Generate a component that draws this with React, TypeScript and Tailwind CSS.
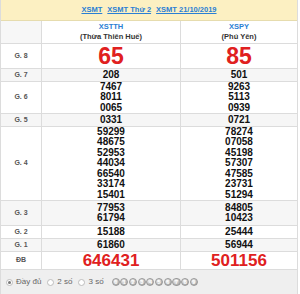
import React from "react";

const rows: { label: string; a: string[]; b: string[]; kind?: "big" | "db"; alt?: boolean; h: number }[] = [
  { label: "G. 8", a: ["65"], b: ["85"], kind: "big", h: 25 },
  { label: "G. 7", a: ["208"], b: ["501"], alt: true, h: 13 },
  { label: "G. 6", a: ["7467", "8011", "0065"], b: ["9263", "5113", "0939"], h: 32 },
  { label: "G. 5", a: ["0331"], b: ["0721"], alt: true, h: 13 },
  { label: "G. 4", a: ["59299", "48675", "52953", "44034", "66540", "33174", "15401"], b: ["78274", "07058", "45198", "57307", "47585", "23731", "51294"], h: 74 },
  { label: "G. 3", a: ["77953", "61794"], b: ["84805", "10423"], alt: true, h: 25 },
  { label: "G. 2", a: ["15188"], b: ["25444"], h: 13 },
  { label: "G. 1", a: ["61860"], b: ["56944"], alt: true, h: 13 },
  { label: "ĐB", a: ["646431"], b: ["501156"], kind: "db", h: 18 },
];

function Cell({ vals, kind }: { vals: string[]; kind?: "big" | "db" }) {
  if (kind === "big")
    return <div className="text-[23px] leading-[23px] font-bold text-[#e02020]">{vals[0]}</div>;
  if (kind === "db")
    return <div className="text-[17px] leading-[17px] font-bold text-[#e02020]">{vals[0]}</div>;
  return (
    <div className="flex flex-col items-center text-[10px] leading-[10.5px] font-bold text-[#111]">
      {vals.map((v) => (
        <span key={v}>{v}</span>
      ))}
    </div>
  );
}

function Radio({ on }: { on?: boolean }) {
  return (
    <span className="w-[7px] h-[7px] shrink-0 rounded-full border border-[#bdbdbd] bg-white flex items-center justify-center mr-[3px]">
      {on && <span className="w-[3px] h-[3px] rounded-full bg-[#777]" />}
    </span>
  );
}

export default function App() {
  return (
    <div className="w-[300px] h-[294px] bg-white overflow-hidden" style={{ fontFamily: '"Liberation Sans", Arial, sans-serif' }}>
      <div className="w-[298px] border-l border-r border-[#dcdcdc]">
        <div className="h-[21px] bg-[#fcf0c2] border-b border-[#e6dcae] flex items-center justify-center gap-[5px] text-[7.5px] font-bold text-[#2a7fd4] underline">
          <span>XSMT</span>
          <span>XSMT Thứ 2</span>
          <span>XSMT 21/10/2019</span>
        </div>
        <div className="flex h-[23px] border-b border-[#dcdcdc] bg-[#f7f7f7]">
          <div className="w-[41px] border-r border-[#dcdcdc]" />
          <div className="w-[139px] border-r border-[#dcdcdc] bg-white flex flex-col items-center justify-center text-[7.5px] leading-[10px] font-bold">
            <span className="text-[#2a7fd4]">XSTTH</span>
            <span className="text-[#333]">(Thừa Thiên Huế)</span>
          </div>
          <div className="flex-1 bg-white flex flex-col items-center justify-center text-[7.5px] leading-[10px] font-bold">
            <span className="text-[#2a7fd4]">XSPY</span>
            <span className="text-[#333]">(Phú Yên)</span>
          </div>
        </div>
        {rows.map((r) => (
          <div key={r.label} className={`flex border-b border-[#dcdcdc] ${r.alt ? "bg-[#f6f6f6]" : "bg-white"}`} style={{ height: r.h }}>
            <div className="w-[41px] border-r border-[#dcdcdc] flex items-center justify-center text-[7px] font-bold text-[#555]">{r.label}</div>
            <div className="w-[139px] border-r border-[#dcdcdc] flex items-center justify-center">
              <Cell vals={r.a} kind={r.kind} />
            </div>
            <div className="flex-1 flex items-center justify-center">
              <Cell vals={r.b} kind={r.kind} />
            </div>
          </div>
        ))}
        <div className="h-[24px] bg-[#efefef] flex items-center pl-[5px] text-[8px] text-[#666]">
          <Radio on />
          <span className="mr-[6px]">Đầy đủ</span>
          <Radio />
          <span className="mr-[6px]">2 số</span>
          <Radio />
          <span className="mr-[8px]">3 số</span>
          <div className="flex gap-[0.6px]">
            {["0", "1", "2", "3", "4", "5", "6", "7", "8", "9"].map((d) => (
              <span
                key={d}
                className="w-[8.1px] h-[8.1px] shrink-0 rounded-full flex items-center justify-center text-[5.5px] font-bold text-white border border-[#9a9a9a]"
                style={{ background: "radial-gradient(circle at 35% 30%, #f4f4f4, #b0b0b0 70%, #8a8a8a)" }}
              >
                {d}
              </span>
            ))}
          </div>
        </div>
      </div>
    </div>
  );
}
